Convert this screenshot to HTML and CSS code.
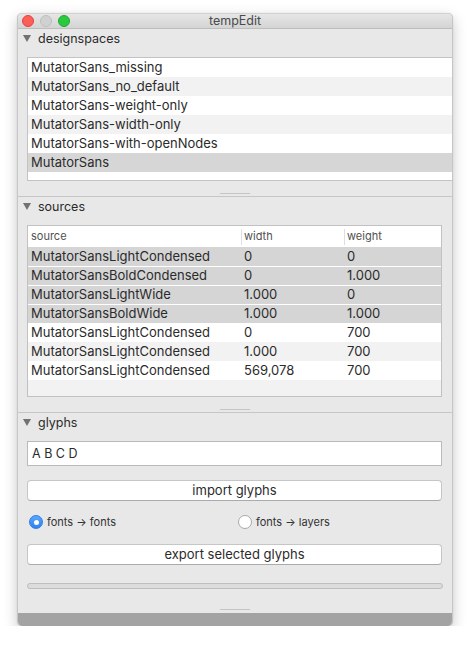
FILE: index.html
```html
<!DOCTYPE html>
<html>
<head>
<meta charset="utf-8">
<title>tempEdit</title>
<link rel="stylesheet" href="styles.css">
</head>
<body>
<div class="window">
  <div class="titlebar">
    <div class="lights">
      <span class="light red"></span>
      <span class="light gray"></span>
      <span class="light green"></span>
    </div>
    <div class="title">tempEdit</div>
    <div></div>
  </div>

  <section class="pane">
    <div class="disclosure"><span class="tri"></span><span>designspaces</span></div>
    <div class="list">
      <div class="row">MutatorSans_missing</div>
      <div class="row alt">MutatorSans_no_default</div>
      <div class="row">MutatorSans-weight-only</div>
      <div class="row alt">MutatorSans-width-only</div>
      <div class="row">MutatorSans-with-openNodes</div>
      <div class="row sel">MutatorSans</div>
      <div class="filler"></div>
    </div>
    <div class="splitter"><span class="handle"></span></div>
  </section>

  <section class="pane">
    <div class="disclosure"><span class="tri"></span><span>sources</span></div>
    <div class="table">
      <div class="thead">
        <div class="th">source</div>
        <div class="th div">width</div>
        <div class="th div">weight</div>
      </div>
      <div class="trow sel"><div>MutatorSansLightCondensed</div><div>0</div><div>0</div></div>
      <div class="trow sel next"><div>MutatorSansBoldCondensed</div><div>0</div><div>1.000</div></div>
      <div class="trow sel next"><div>MutatorSansLightWide</div><div>1.000</div><div>0</div></div>
      <div class="trow sel next"><div>MutatorSansBoldWide</div><div>1.000</div><div>1.000</div></div>
      <div class="trow"><div>MutatorSansLightCondensed</div><div>0</div><div>700</div></div>
      <div class="trow alt"><div>MutatorSansLightCondensed</div><div>1.000</div><div>700</div></div>
      <div class="trow"><div>MutatorSansLightCondensed</div><div>569,078</div><div>700</div></div>
      <div class="tfiller"></div>
    </div>
    <div class="splitter"><span class="handle"></span></div>
  </section>

  <section class="pane">
    <div class="disclosure"><span class="tri"></span><span>glyphs</span></div>
    <div class="field">A B C D</div>
    <div class="button first">import glyphs</div>
    <div class="radios">
      <label class="radio"><span class="dot on"></span><span>fonts → fonts</span></label>
      <label class="radio"><span class="dot"></span><span>fonts → layers</span></label>
    </div>
    <div class="button second">export selected glyphs</div>
    <div class="progress"></div>
    <div class="splitter last"><span class="handle"></span></div>
  </section>

  <div class="bottombar"></div>
</div>
</body>
</html>
```

FILE: styles.css
```css
html, body {
  margin: 0;
  padding: 0;
  background: #ffffff;
}

body {
  font-family: Inter, "Liberation Sans", Arial, sans-serif;
  color: #2b2b2b;
}

.window {
  margin: 13px 0 0 17px;
  width: 436px;
  box-sizing: border-box;
  background: #e8e8e8;
  border: 1px solid #c6c6c6;
  border-top-color: #d2d2d2;
  border-bottom: none;
  border-radius: 5px;
  overflow: hidden;
  display: flex;
  flex-direction: column;
  box-shadow: 0 5px 14px rgba(0, 0, 0, 0.22), 0 0 1px rgba(0, 0, 0, 0.2);
}

/* title bar */
.titlebar {
  height: 14px;
  border-bottom: 1px solid #bdbdbd;
  background: linear-gradient(#e6e6e6, #d4d4d4);
  display: grid;
  grid-template-columns: 1fr auto 1fr;
  align-items: center;
}

.lights {
  display: flex;
  gap: 6px;
  padding-left: 4px;
  align-items: center;
}

.light {
  width: 12px;
  height: 12px;
  border-radius: 50%;
  box-sizing: border-box;
}

.light.red {
  background: #fc5f57;
  border: 1px solid #e0443e;
}

.light.gray {
  background: #d1d1d1;
  border: 1px solid #bebebe;
}

.light.green {
  background: #2ac940;
  border: 1px solid #1fa931;
}

.title {
  font-size: 12.5px;
  line-height: 14px;
  color: #4a4a4a;
}

/* panes */
.pane {
  display: flex;
  flex-direction: column;
}

.disclosure {
  height: 18px;
  display: flex;
  align-items: center;
  gap: 7px;
  padding-left: 5px;
  font-size: 12.5px;
  color: #2b2b2b;
}

.tri {
  width: 0;
  height: 0;
  border-left: 4px solid transparent;
  border-right: 4px solid transparent;
  border-top: 7px solid #727272;
  margin-top: 1px;
}

.splitter {
  margin-top: 12px;
  height: 4px;
  box-sizing: border-box;
  border-bottom: 1px solid #c6c6c6;
  display: flex;
  justify-content: center;
  align-items: flex-start;
}

.splitter.last {
  margin-top: 20px;
  border-bottom: none;
}

.handle {
  width: 30px;
  height: 1px;
  background: #c4c4c4;
}

/* designspaces list */
.list {
  margin: 10px 0 0 9px;
  height: 124px;
  box-sizing: border-box;
  border: 1px solid #c3c3c3;
  border-right: none;
  background: #ffffff;
  display: flex;
  flex-direction: column;
}

.row {
  height: 19px;
  line-height: 19px;
  padding-left: 3px;
  font-size: 13px;
  background: #ffffff;
}

.row.alt {
  background: #f2f2f2;
}

.row.sel {
  background: #d6d6d6;
}

.filler {
  flex: 1;
  background: #ffffff;
}

/* sources table */
.table {
  margin: 10px 10px 0 9px;
  height: 172px;
  box-sizing: border-box;
  border: 1px solid #c1c1c1;
  background: #ffffff;
  display: flex;
  flex-direction: column;
}

.thead,
.trow {
  display: grid;
  grid-template-columns: 213px 103px 1fr;
}

.thead {
  height: 21px;
  background: #ffffff;
}

.th {
  font-size: 11px;
  line-height: 21px;
  color: #505050;
  padding-left: 3px;
}

.th.div {
  background: linear-gradient(#dedede, #dedede) no-repeat 0 3px / 1px 16px;
}

.trow {
  height: 19px;
  line-height: 19px;
  font-size: 13px;
  background: #ffffff;
}

.trow > div {
  padding-left: 3px;
  white-space: nowrap;
}

.trow.alt {
  background: #f2f2f2;
}

.trow.sel {
  background: #d5d5d5;
}

.trow.sel.next {
  box-shadow: inset 0 1px 0 #ffffff;
}

.tfiller {
  flex: 1;
  background: #f2f2f2;
}

/* glyphs */
.field {
  margin: 10px 10px 0 9px;
  height: 25px;
  box-sizing: border-box;
  border: 1px solid #bababa;
  background: #ffffff;
  padding-left: 4px;
  font-size: 12.5px;
  line-height: 23px;
}

.button {
  margin: 0 10px 0 9px;
  height: 21px;
  box-sizing: border-box;
  border: 1px solid #c6c6c6;
  border-bottom-color: #ababab;
  border-radius: 4px;
  background: #ffffff;
  text-align: center;
  font-size: 13px;
  line-height: 19px;
  color: #2b2b2b;
}

.button.first {
  margin-top: 14px;
}

.button.second {
  margin-top: 11px;
}

.radios {
  margin-top: 10px;
  height: 22px;
  padding-left: 11px;
  display: grid;
  grid-template-columns: 209px 1fr;
  align-items: center;
}

.radio {
  display: flex;
  align-items: center;
  gap: 4px;
  font-size: 11px;
  color: #333333;
}

.dot {
  width: 14px;
  height: 14px;
  box-sizing: border-box;
  border-radius: 50%;
  background: #ffffff;
  border: 1px solid #a9a9a9;
  display: flex;
  align-items: center;
  justify-content: center;
}

.dot.on {
  background: linear-gradient(#5aa6fb, #2c82f2);
  border-color: #2b7de8;
}

.dot.on::after {
  content: "";
  width: 5px;
  height: 5px;
  border-radius: 50%;
  background: #ffffff;
}

.progress {
  margin: 18px 9px 0 9px;
  height: 6px;
  box-sizing: border-box;
  border: 1px solid #bebebe;
  border-radius: 3px;
  background: #dcdcdc;
}

.bottombar {
  height: 13px;
  background: #a3a3a3;
}
```
